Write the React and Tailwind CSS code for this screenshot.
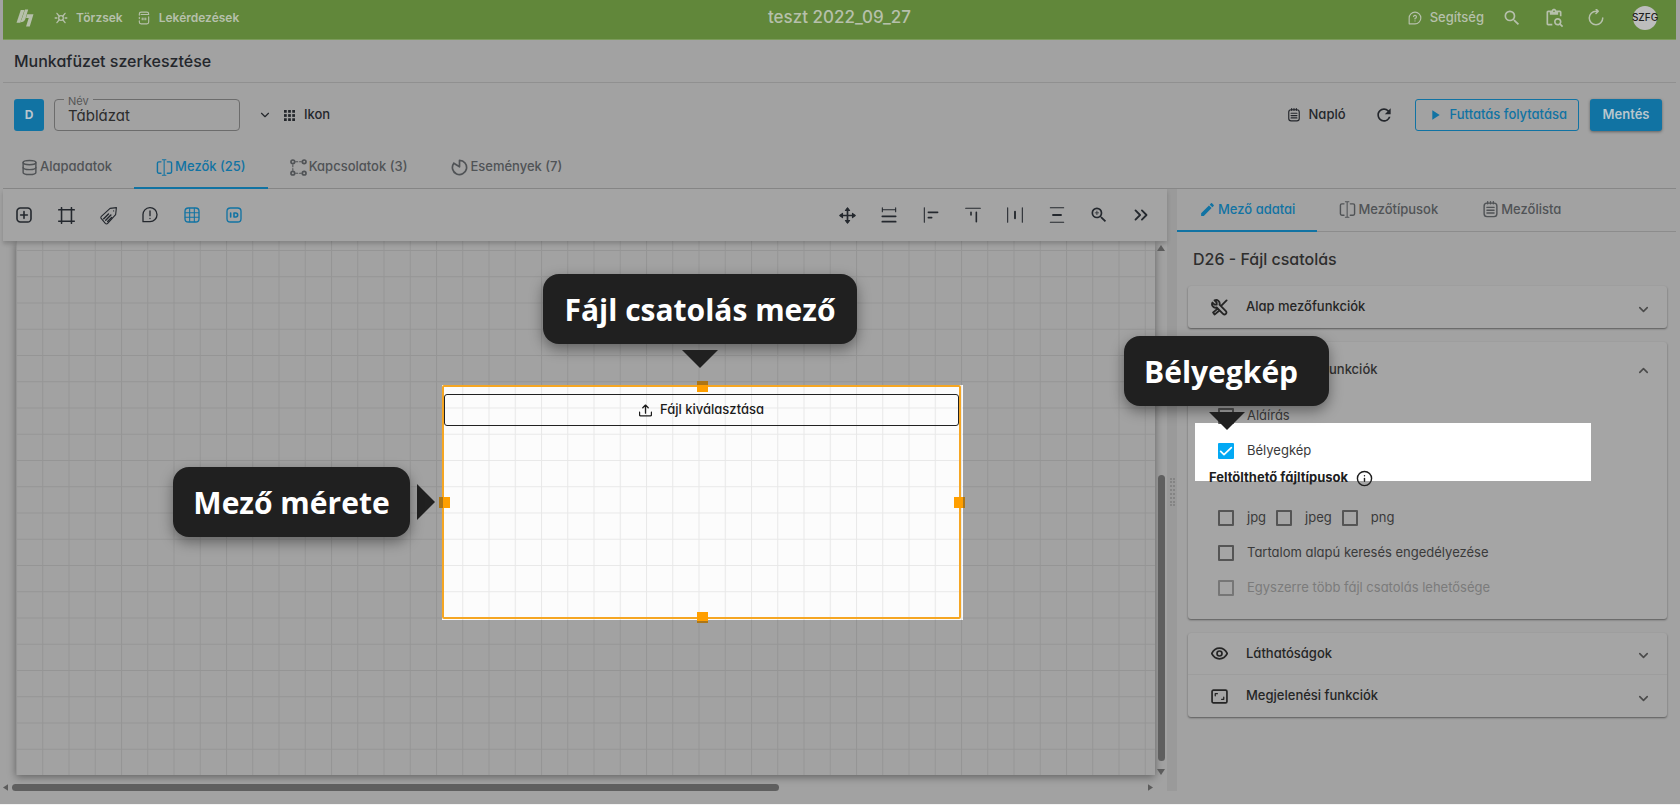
import { Database, ChevronsRight, ChevronDown, ChevronUp, Info } from 'lucide-react';
import { MdSearch, MdContentPasteSearch, MdRefresh, MdPlayArrow, MdEdit, MdZoomIn } from 'react-icons/md';

function Icon({ className = 'size-4', width = 2, children }) {
  return (
    <svg viewBox="0 0 24 24" className={`shrink-0 ${className}`} fill="none" stroke="currentColor" strokeWidth={width} strokeLinecap="round" strokeLinejoin="round" aria-hidden="true">
      {children}
    </svg>
  );
}

const Logo = () => (
  <svg viewBox="0 0 34 34" className="h-[18px] w-[18px]" fill="currentColor" aria-hidden="true">
    <path d="M9 2h7L8 26H1z" />
    <path d="M17 1h6l-5 17c-1 4-4 7-10 7l3-6z" />
    <path d="M21 10h12l-7 23h-7l5-16h-5z" />
  </svg>
);
const HubIcon = () => (
  <Icon className="size-[14px]" width={2.2}>
    <circle cx="12" cy="12" r="4" />
    <path d="M15 9l4-5M9 9L5 4M15 15l4 5M9 15l-4 5M2 12h3M19 12h3" />
  </Icon>
);
const QueryIcon = () => (
  <Icon className="size-[14px]">
    <path d="M4 7V5a3 3 0 0 1 3-3h10a3 3 0 0 1 3 3v1H7M4 17v2a3 3 0 0 0 3 3h10a3 3 0 0 0 3-3v-9M4 11v2M9 12v3M12 12v3M15 12v3" />
  </Icon>
);
const HelpIcon = () => (
  <Icon className="size-[14px]">
    <path d="M2 22V12A10 10 0 1 1 12 22zM9.500 9.500a2.500 2.500 0 1 1 2.500 3v1M12 17v.2" />
  </Icon>
);
const ReloadIcon = () => (
  <Icon className="size-[18px]">
    <path d="M21 12a9 9 0 1 1-9-9h3M12 0l3 3-3 3" />
  </Icon>
);
const NotesIcon = ({ className }) => (
  <Icon className={className}>
    <rect x="3" y="3" width="18" height="19" rx="4" />
    <path d="M8 1v3M12 1v3M16 1v3M7 9h10M7 13h10M7 17h10" />
  </Icon>
);
const FieldIcon = () => (
  <Icon className="size-[17px]">
    <path d="M7 4H4a2 2 0 0 0-2 2v12a2 2 0 0 0 2 2h3M16 4h4a2 2 0 0 1 2 2v12a2 2 0 0 1-2 2h-4" />
    <path strokeWidth="1.500" d="M9 1h5M9 23h5M11.500 1v22" />
  </Icon>
);
const LinksIcon = () => (
  <Icon className="size-[17px]" width={2.4}>
    <circle cx="4" cy="4" r="2.600" />
    <circle cx="20" cy="4" r="2.600" />
    <circle cx="4" cy="20" r="2.600" />
    <circle cx="20" cy="20" r="2.600" />
    <path strokeWidth="1.500" strokeDasharray="3 2.500" d="M4 8v8M8 4h8M8 20h8" />
  </Icon>
);
const EventIcon = () => (
  <Icon className="size-[17px]" width={2.4}>
    <path d="M12 11V2a10 10 0 1 1-8 4zM4 6l8 5" />
  </Icon>
);
const AddIcon = () => (
  <Icon width={2.4}>
    <rect x="1.500" y="1.500" width="21" height="21" rx="5" />
    <path d="M12 7v10M7 12h10" />
  </Icon>
);
const FrameIcon = () => (
  <Icon className="size-[17px]" width={2.2}>
    <path d="M5 1v22M19 1v22M1 4h22M1 20h22" />
  </Icon>
);
const TagIcon = () => (
  <Icon className="size-[19px]" width={1.4}>
    <path d="M22 2l-8 1L3 13a2 2 0 0 0 0 3l5 6a2 2 0 0 0 3 0l10-11zM18.500 6v.2" />
    <path strokeWidth="1.800" d="M6 16l6-6M8.500 18l6.500-6.500M11 19.500l5-5" />
  </Icon>
);
const AlertIcon = () => (
  <Icon>
    <path d="M1.500 22V12A10.500 10.500 0 1 1 12 22zM12 6v7M12 17v.2" />
  </Icon>
);
const GridIcon = () => (
  <Icon>
    <rect x="1.500" y="1.500" width="21" height="21" rx="5" />
    <path strokeWidth="1.600" d="M8.500 2v20M15.500 2v20M2 8.500h20M2 15.500h20" />
  </Icon>
);
const IdIcon = () => (
  <Icon>
    <rect x="1.500" y="1.500" width="21" height="21" rx="5" />
    <path strokeWidth="2.400" d="M7 9v6M12 9v6h2.500a3 3 0 0 0 0-6z" />
  </Icon>
);
const MoveIcon = () => (
  <Icon className="size-[17px]" width={2.4}>
    <path d="M12 3v18M3 12h18" />
    <path fill="currentColor" strokeWidth="1.500" d="M12 1l3 4H9zM12 23l3-4H9zM1 12l4-3v6zM23 12l-4-3v6z" />
  </Icon>
);
const WidthIcon = () => (
  <Icon>
    <path strokeWidth="1.600" d="M2 1v6M22 1v6M2 4h20" />
    <path strokeWidth="2.600" d="M2 14h20M2 22h20" />
  </Icon>
);
const AlignLeftIcon = () => (
  <Icon>
    <path strokeWidth="1.600" d="M2 1v22" />
    <path strokeWidth="2.400" d="M8 8h14M8 16h5" />
  </Icon>
);
const AlignTopIcon = () => (
  <Icon>
    <path strokeWidth="1.600" d="M1 2h22" />
    <path strokeWidth="2.400" d="M9 8v4M17 8v14" />
  </Icon>
);
const DistributeXIcon = () => (
  <Icon>
    <path strokeWidth="1.600" d="M1 1v22M23 1v22" />
    <path strokeWidth="2.800" d="M12 7v10" />
  </Icon>
);
const DistributeYIcon = () => (
  <Icon>
    <path strokeWidth="1.600" d="M2 1h20M2 23h20" />
    <path strokeWidth="2.800" d="M6 12h12" />
  </Icon>
);
const UploadIcon = () => (
  <Icon className="size-[13px]" width={2.4}>
    <path d="M12 17V2M7 7l5-5 5 5M1 15v5a2 2 0 0 0 2 2h18a2 2 0 0 0 2-2v-5" />
  </Icon>
);
const ToolsIcon = () => (
  <Icon className="size-[17px]" width={2.6}>
    <path d="M5 2l3 3v3H5L2 5a5 5 0 0 0 6 7l9 9a2.500 2.500 0 0 0 4-4l-9-9a5 5 0 0 0-7-6zM22 2l-7 7M9 14l-6 5 2 3 6-5" />
  </Icon>
);
const EyeIcon = () => (
  <Icon className="size-[17px]" width={2.4}>
    <path d="M1 12c5-10 17-10 22 0-5 10-17 10-22 0z" />
    <circle cx="12" cy="12" r="3.500" />
  </Icon>
);
const AspectIcon = () => (
  <Icon className="size-[17px]" width={2.4}>
    <rect x="1.500" y="3" width="21" height="18" rx="2" />
    <path strokeWidth="1.800" d="M6 11V8h3M18 13v3h-3" />
  </Icon>
);
const DotsIcon = () => (
  <svg viewBox="0 0 12 12" className="size-[11px]" fill="currentColor" aria-hidden="true">
    {[0, 4.5, 9].map((y) => [0, 4.5, 9].map((x) => <rect key={`${x}-${y}`} x={x} y={y} width="3" height="3" />))}
  </svg>
);

function GridLines({ id, x, y }) {
  return (
    <svg className="absolute inset-0 size-full text-black/8" aria-hidden="true">
      <defs>
        <pattern id={id} x={x} y={y} width="26.25" height="26.25" patternUnits="userSpaceOnUse">
          <path d="M0.500 0v26.25M0 0.500h26.25" stroke="currentColor" fill="none" />
        </pattern>
      </defs>
      <rect width="100%" height="100%" fill={`url(#${id})`} />
    </svg>
  );
}

function Tab({ icon, active, first, children }) {
  return (
    <button
      type="button"
      role="tab"
      aria-selected={!!active}
      className={`-mb-px flex items-center gap-[2px] border-b-2 text-[13px] font-medium ${first ? 'pr-[22px] pl-[18px]' : 'px-[22px]'} ${active ? 'border-[#1173a3] text-[#1173a3]' : 'border-transparent text-[#505356]'}`}
    >
      {icon}
      {children}
    </button>
  );
}

function ToolButton({ label, active, children }) {
  return (
    <button type="button" aria-label={label} className={`flex h-8 w-[42px] items-center justify-center ${active ? 'text-[#1173a3]' : 'text-[#24282e]'}`}>
      {children}
    </button>
  );
}

function Check({ label, checked, disabled, className = '' }) {
  return (
    <label className={`flex items-center gap-[13px] text-[13px] ${disabled ? 'text-[#7b7b7b]' : 'text-[#3a3a3a]'} ${className}`}>
      <span className="grid size-4 shrink-0">
        <input
          type="checkbox"
          defaultChecked={checked}
          disabled={disabled}
          className="col-start-1 row-start-1 size-4 appearance-none rounded-[1px] border-2 border-[#555555] checked:border-[#03a9f4] checked:bg-[#03a9f4] disabled:border-[#767676]"
        />
        {checked && (
          <Icon className="pointer-events-none col-start-1 row-start-1 size-4 text-white" width={2.6}>
            <path d="M4 12.500l5 5L20 7" />
          </Icon>
        )}
      </span>
      {label}
    </label>
  );
}

function PanelRow({ icon, children }) {
  return (
    <button type="button" className="flex h-[42px] w-full items-center pr-4 pl-[23px] text-left text-[13px] font-medium text-[#252525]">
      {icon}
      <span className="ml-[18px] flex-1">{children}</span>
      <ChevronDown className="mt-1 size-[15px] text-[#4a4a4a]" strokeWidth={2.5} />
    </button>
  );
}

function Callout({ className, children }) {
  return (
    <div className={`absolute z-20 flex h-[70px] items-center rounded-[16px] bg-[#202020] font-['Open_Sans','Noto_Sans',sans-serif] text-[30px] font-bold whitespace-nowrap text-white shadow-[0_5px_14px_rgba(0,0,0,0.4)] ${className}`}>
      {children}
    </div>
  );
}

const DownPointer = ({ className }) => (
  <svg viewBox="0 0 36 18" className={`absolute z-20 h-[18px] w-9 ${className}`} aria-hidden="true">
    <path d="M0 0h36L18 18z" fill="#202020" />
  </svg>
);

const card = 'rounded-[3px] bg-[#a5a5a5] shadow-[0_1px_2px_rgba(0,0,0,0.45)]';

export default function App() {
  return (
    <div className="flex min-h-screen flex-col border-b border-[#f4f4f4] bg-[#a2a2a2] pr-1 pl-[3px] font-[Inter,sans-serif] text-[13px] text-[#24272c] [font-feature-settings:'cv11']">
      <header className="grid h-10 grid-cols-[1fr_auto_1fr] items-center border-b border-[#7c9b5b] bg-[#61873a] pb-1 font-medium text-[#b6c0ab]">
        <nav className="flex items-center pl-[13px] text-[12px] font-semibold">
          <a href="#home" aria-label="Kezdőlap"><Logo /></a>
          <a href="#torzsek" className="ml-5 flex items-center gap-2"><HubIcon />Törzsek</a>
          <a href="#lekerdezesek" className="ml-[14px] flex items-center gap-2"><QueryIcon />Lekérdezések</a>
        </nav>
        <div className="text-[17px]">teszt 2022_09_27</div>
        <div className="flex items-center justify-end pr-[19px]">
          <a href="#segitseg" className="mr-[7px] flex items-center gap-2"><HelpIcon />Segítség</a>
          <button type="button" aria-label="Keresés" className="flex w-[42px] justify-center"><MdSearch className="size-5" /></button>
          <button type="button" aria-label="Vágólap" className="flex w-[42px] justify-center"><MdContentPasteSearch className="size-5" /></button>
          <button type="button" aria-label="Újratöltés" className="flex w-[42px] justify-center"><ReloadIcon /></button>
          <button type="button" className="ml-4 flex size-6 items-center justify-center rounded-full bg-[#bdbdbd] text-[10px] text-[#202020]">SZFG</button>
        </div>
      </header>

      <div className="flex h-[43px] items-center border-b border-[#909090] pl-[11px]">
        <h1 className="text-[16px] font-medium">Munkafüzet szerkesztése</h1>
      </div>

      <div className="flex h-16 items-center pr-[14px] pl-[11px]">
        <button type="button" className="h-8 w-[30px] rounded-[3px] bg-[#1173a3] text-[12px] font-bold text-[#b9c6cd]">D</button>
        <div className="relative ml-[10px]">
          <label htmlFor="nev" className="absolute -top-1 left-[10px] bg-[#a2a2a2] px-1 text-[11px] leading-3 text-[#565656]">Név</label>
          <input id="nev" defaultValue="Táblázat" className="h-8 w-[186px] rounded-[4px] border border-[#6c6c6c] bg-transparent px-[13px] text-[15px] text-[#2c2c2c] outline-none" />
        </div>
        <ChevronDown className="ml-[18px] size-[14px]" />
        <button type="button" className="ml-3 flex items-center gap-[9px] font-medium"><DotsIcon />Ikon</button>
        <div className="ml-auto flex items-center">
          <button type="button" className="flex items-center gap-2 font-medium"><NotesIcon className="size-[14px]" />Napló</button>
          <button type="button" aria-label="Frissítés" className="mr-[21px] ml-7"><MdRefresh className="size-5" /></button>
          <button type="button" className="flex h-8 items-center gap-[7px] rounded-[3px] border border-[#1173a3] px-[11px] font-medium text-[#1173a3]">
            <MdPlayArrow className="size-4" />Futtatás folytatása
          </button>
          <button type="button" className="ml-[11px] h-8 w-[72px] rounded-[3px] bg-[#1173a3] font-semibold text-[#b9c6cd] shadow-[0_1px_3px_rgba(0,0,0,0.4)]">Mentés</button>
        </div>
      </div>

      <div role="tablist" className="flex h-[42px] border-b border-[#878787]">
        <Tab first icon={<Database className="size-[17px]" />}>Alapadatok</Tab>
        <Tab active icon={<FieldIcon />}>Mezők (25)</Tab>
        <Tab icon={<LinksIcon />}>Kapcsolatok (3)</Tab>
        <Tab icon={<EventIcon />}>Események (7)</Tab>
      </div>

      <main className="flex flex-1">
        <section className="flex min-w-0 flex-1 flex-col">
          <div className="relative z-10 flex h-[52px] items-center bg-[#a4a4a4] pr-[5px] shadow-[0_3px_4px_rgba(0,0,0,0.18)]">
            <ToolButton label="Hozzáadás"><AddIcon /></ToolButton>
            <ToolButton label="Keret"><FrameIcon /></ToolButton>
            <ToolButton label="Címke"><TagIcon /></ToolButton>
            <ToolButton label="Figyelmeztetés"><AlertIcon /></ToolButton>
            <ToolButton label="Rács" active><GridIcon /></ToolButton>
            <ToolButton label="Azonosító" active><IdIcon /></ToolButton>
            <div className="flex-1" />
            <ToolButton label="Mozgatás"><MoveIcon /></ToolButton>
            <ToolButton label="Szélesség"><WidthIcon /></ToolButton>
            <ToolButton label="Balra igazítás"><AlignLeftIcon /></ToolButton>
            <ToolButton label="Felülre igazítás"><AlignTopIcon /></ToolButton>
            <ToolButton label="Vízszintes elosztás"><DistributeXIcon /></ToolButton>
            <ToolButton label="Függőleges elosztás"><DistributeYIcon /></ToolButton>
            <ToolButton label="Nagyítás"><MdZoomIn className="size-5" /></ToolButton>
            <ToolButton label="Tovább"><ChevronsRight className="size-[22px]" /></ToolButton>
          </div>

          <div className="flex min-h-[534px] flex-1">
            <div className="relative ml-[13px] flex-1 bg-[#a2a2a2] shadow-[0_2px_8px_rgba(0,0,0,0.4)]">
              <GridLines id="sheet-grid" x="0" y="9" />

              <div className="absolute top-[144px] left-[426px] h-[235px] w-[521px] bg-[#fcfcfc] pr-[2px] pb-px">
                <GridLines id="field-grid" x="20.25" y="22.500" />
                <div className="relative h-full rounded-[2px] border-2 border-[#f5a623] pt-[7px]">
                  <button type="button" className="flex h-8 w-full items-center justify-center gap-2 rounded-[3px] border border-[#222222] text-[13px] font-medium text-[#1c1c1c]">
                    <UploadIcon />Fájl kiválasztása
                  </button>
                </div>
                <span className="absolute -top-1 left-[255px] size-[11px] border-t-4 border-[#ad7616] bg-[#ff9f00]" />
                <span className="absolute -bottom-[3px] left-[255px] size-[11px] border-b-2 border-[#ad7616] bg-[#ff9f00]" />
                <span className="absolute top-[112px] -left-[3px] size-[11px] border-l-4 border-[#ad7616] bg-[#ff9f00]" />
                <span className="absolute top-[112px] -right-[2px] size-[11px] border-r-2 border-[#ad7616] bg-[#ff9f00]" />
              </div>

              <Callout className="top-[33px] left-[527px] w-[314px] justify-center">Fájl csatolás mező</Callout>
              <DownPointer className="top-[109px] left-[666px]" />
              <Callout className="top-[226px] left-[157px] w-[237px] justify-center">Mező mérete</Callout>
              <svg viewBox="0 0 18 36" className="absolute top-[243px] left-[401px] h-9 w-[18px]" aria-hidden="true">
                <path d="M0 0v36L18 18z" fill="#202020" />
              </svg>
            </div>
            <div className="relative z-10 flex w-3 flex-col items-center pt-1 text-[#5c5c5c]">
              <svg viewBox="0 0 8 6" className="w-2" fill="currentColor" aria-hidden="true"><path d="M4 0l4 6H0z" /></svg>
              <div className="flex-1" />
              <div className="h-[286px] w-[7px] rounded-full bg-[#5f5f5f]" />
              <svg viewBox="0 0 8 6" className="mt-2 w-2" fill="currentColor" aria-hidden="true"><path d="M4 6L0 0h8z" /></svg>
            </div>
          </div>

          <div className="relative z-10 flex h-4 items-center pt-2 pr-[14px] text-[#5c5c5c]">
            <svg viewBox="0 0 6 8" className="h-[7px] w-[5px]" fill="currentColor" aria-hidden="true"><path d="M0 4l6-4v8z" /></svg>
            <div className="ml-1 h-[7px] w-2/3 rounded-full bg-[#5f5f5f]" />
            <svg viewBox="0 0 6 8" className="ml-auto h-[7px] w-[5px]" fill="currentColor" aria-hidden="true"><path d="M6 4L0 0v8z" /></svg>
          </div>
        </section>

        <div className="flex w-[10px] flex-col items-center bg-[#9a9a9a] pt-[289px]">
          <div className="flex h-7 w-[5px] justify-between">
            <span className="border-l-2 border-dotted border-[#848484]" />
            <span className="border-l-2 border-dotted border-[#848484]" />
          </div>
        </div>

        <aside className="w-[499px] shrink-0">
          <div role="tablist" className="flex h-[43px] border-b border-[#8c8c8c]">
            <Tab active icon={<MdEdit className="size-[17px]" />}>Mező adatai</Tab>
            <Tab icon={<FieldIcon />}>Mezőtípusok</Tab>
            <Tab icon={<NotesIcon className="size-[17px]" />}>Mezőlista</Tab>
          </div>
          <h2 className="flex h-[54px] items-center pl-4 text-[16px] font-medium text-[#2e2e2e]">D26 - Fájl csatolás</h2>

          <div className="flex flex-col gap-[14px] pr-[9px] pl-[11px]">
            <div className={card}>
              <PanelRow icon={<ToolsIcon />}>Alap mezőfunkciók</PanelRow>
            </div>

            <div className={`relative pb-[14px] ${card}`}>
              <div className="absolute top-[81px] right-[76px] left-[7px] h-[58px] bg-white" />
              <Callout className="-top-[6px] -left-[64px] w-[205px] pl-5">Bélyegkép</Callout>
              <DownPointer className="top-[70px] left-[21px]" />
              <div className="relative">
                <button type="button" className="flex h-14 w-full items-center pr-4 pl-[141px] text-[13px] font-medium text-[#303030]">
                  <span className="flex-1 text-left">unkciók</span>
                  <ChevronUp className="size-[15px] text-[#4a4a4a]" strokeWidth={2.5} />
                </button>
                <div className="pl-[30px]">
                  <Check className="h-[35px]" label="Aláírás" />
                  <Check className="h-[35px]" label="Bélyegkép" checked />
                </div>
                <div className="mb-3 flex h-5 items-center gap-2 pl-[21px] text-[13px] font-bold text-[#1e1e1e]">
                  Feltölthető fájltípusok
                  <Info className="size-[17px]" />
                </div>
                <div className="pl-[30px]">
                  <div className="flex h-[35px] items-center gap-[10px]">
                    <Check label="jpg" />
                    <Check label="jpeg" />
                    <Check label="png" />
                  </div>
                  <Check className="h-[35px]" label="Tartalom alapú keresés engedélyezése" />
                  <Check className="h-[35px]" label="Egyszerre több fájl csatolás lehetősége" disabled />
                </div>
              </div>
            </div>

            <div className={`divide-y divide-[#9d9d9d] ${card}`}>
              <PanelRow icon={<EyeIcon />}>Láthatóságok</PanelRow>
              <PanelRow icon={<AspectIcon />}>Megjelenési funkciók</PanelRow>
            </div>
          </div>
        </aside>
      </main>
      <div className="h-[13px]" />
    </div>
  );
}
